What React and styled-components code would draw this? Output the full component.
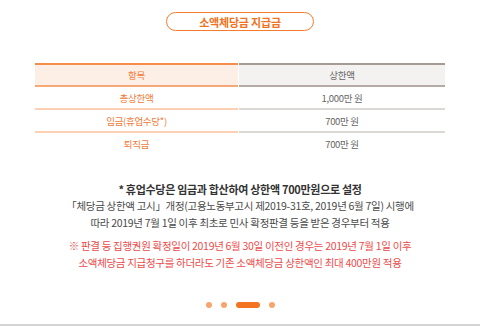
import React from 'react'
import styled, { createGlobalStyle } from 'styled-components'

const GlobalStyle = createGlobalStyle`
  html, body {
    margin: 0;
    padding: 0;
    background: #fff;
  }
  body {
    font-family: "Noto Sans CJK KR", "Noto Sans", sans-serif;
  }
`

const Page = styled.div`
  width: 480px;
  height: 326px;
  box-sizing: border-box;
  border-bottom: 2px solid #d4d4d4;
  display: flex;
  flex-direction: column;
  align-items: center;
  padding-top: 12px;
`

const Pill = styled.div`
  width: 148px;
  height: 19px;
  box-sizing: border-box;
  border: 1.5px solid #f47b2c;
  border-radius: 10px;
  display: flex;
  align-items: center;
  justify-content: center;
  color: #f0731f;
  font-size: 11px;
  font-weight: 700;
  letter-spacing: -0.2px;
`

const Table = styled.div`
  width: 410px;
  margin-top: 32px;
  display: grid;
  grid-template-columns: 203px 206px;
  column-gap: 1px;
`

const Cell = styled.div`
  height: ${(p) => (p.head ? '20px' : '21px')};
  display: flex;
  align-items: center;
  justify-content: center;
  font-size: 9.5px;
  letter-spacing: -0.3px;
  color: ${(p) => (p.side === 'left' ? '#f07a38' : '#666')};
  background: ${(p) =>
    p.head ? (p.side === 'left' ? '#fdefe6' : '#f3f2f1') : 'transparent'};
  border-top: ${(p) =>
    p.head ? (p.side === 'left' ? '2px solid #f58c4a' : '2px solid #a69a94') : 'none'};
  border-bottom: ${(p) => {
    if (p.last) return '2px solid transparent'
    if (p.head) return p.side === 'left' ? '2px solid #f7a878' : '2px solid #b5aba6'
    return p.side === 'left' ? '2px solid #fdd0b4' : '2px solid #dcd8d6'
  }};
`

const Notes = styled.div`
  margin-top: 24px;
  display: flex;
  flex-direction: column;
  align-items: center;
`

const Lead = styled.div`
  font-size: 11px;
  font-weight: 700;
  color: #333;
  line-height: 18px;
  letter-spacing: -0.3px;
`

const Line = styled.div`
  font-size: 10.5px;
  color: ${(p) => (p.warn ? '#ec4b4b' : '#4a4a4a')};
  line-height: 16.5px;
  letter-spacing: -0.3px;
  margin-top: ${(p) => p.gap || 0}px;
`

const Dots = styled.div`
  margin-top: auto;
  margin-bottom: 16px;
  display: flex;
  align-items: center;
  gap: 9px;
`

const Dot = styled.span`
  display: block;
  width: ${(p) => (p.active ? '24px' : '6px')};
  height: 6px;
  border-radius: 3px;
  background: ${(p) => (p.active ? '#f47320' : '#f9a46c')};
`

const rows = [
  ['총상한액', '1,000만 원'],
  ['임금(휴업수당*)', '700만 원'],
  ['퇴직금', '700만 원'],
]

export default function App() {
  return (
    <>
      <GlobalStyle />
      <Page>
        <Pill>소액체당금 지급금</Pill>
        <Table>
          <Cell head side="left">항목</Cell>
          <Cell head side="right">상한액</Cell>
          {rows.map(([name, amount], i) => (
            <React.Fragment key={name}>
              <Cell side="left" last={i === rows.length - 1}>{name}</Cell>
              <Cell side="right" last={i === rows.length - 1}>{amount}</Cell>
            </React.Fragment>
          ))}
        </Table>
        <Notes>
          <Lead>* 휴업수당은 임금과 합산하여 상한액 700만원으로 설정</Lead>
          <Line>「체당금 상한액 고시」개정(고용노동부고시 제2019-31호, 2019년 6월 7일) 시행에</Line>
          <Line>따라 2019년 7월 1일 이후 최초로 민사 확정판결 등을 받은 경우부터 적용</Line>
          <Line warn gap={7}>※ 판결 등 집행권원 확정일이 2019년 6월 30일 이전인 경우는 2019년 7월 1일 이후</Line>
          <Line warn>소액체당금 지급청구를 하더라도 기존 소액체당금 상한액인 최대 400만원 적용</Line>
        </Notes>
        <Dots>
          <Dot />
          <Dot />
          <Dot active />
          <Dot />
        </Dots>
      </Page>
    </>
  )
}
